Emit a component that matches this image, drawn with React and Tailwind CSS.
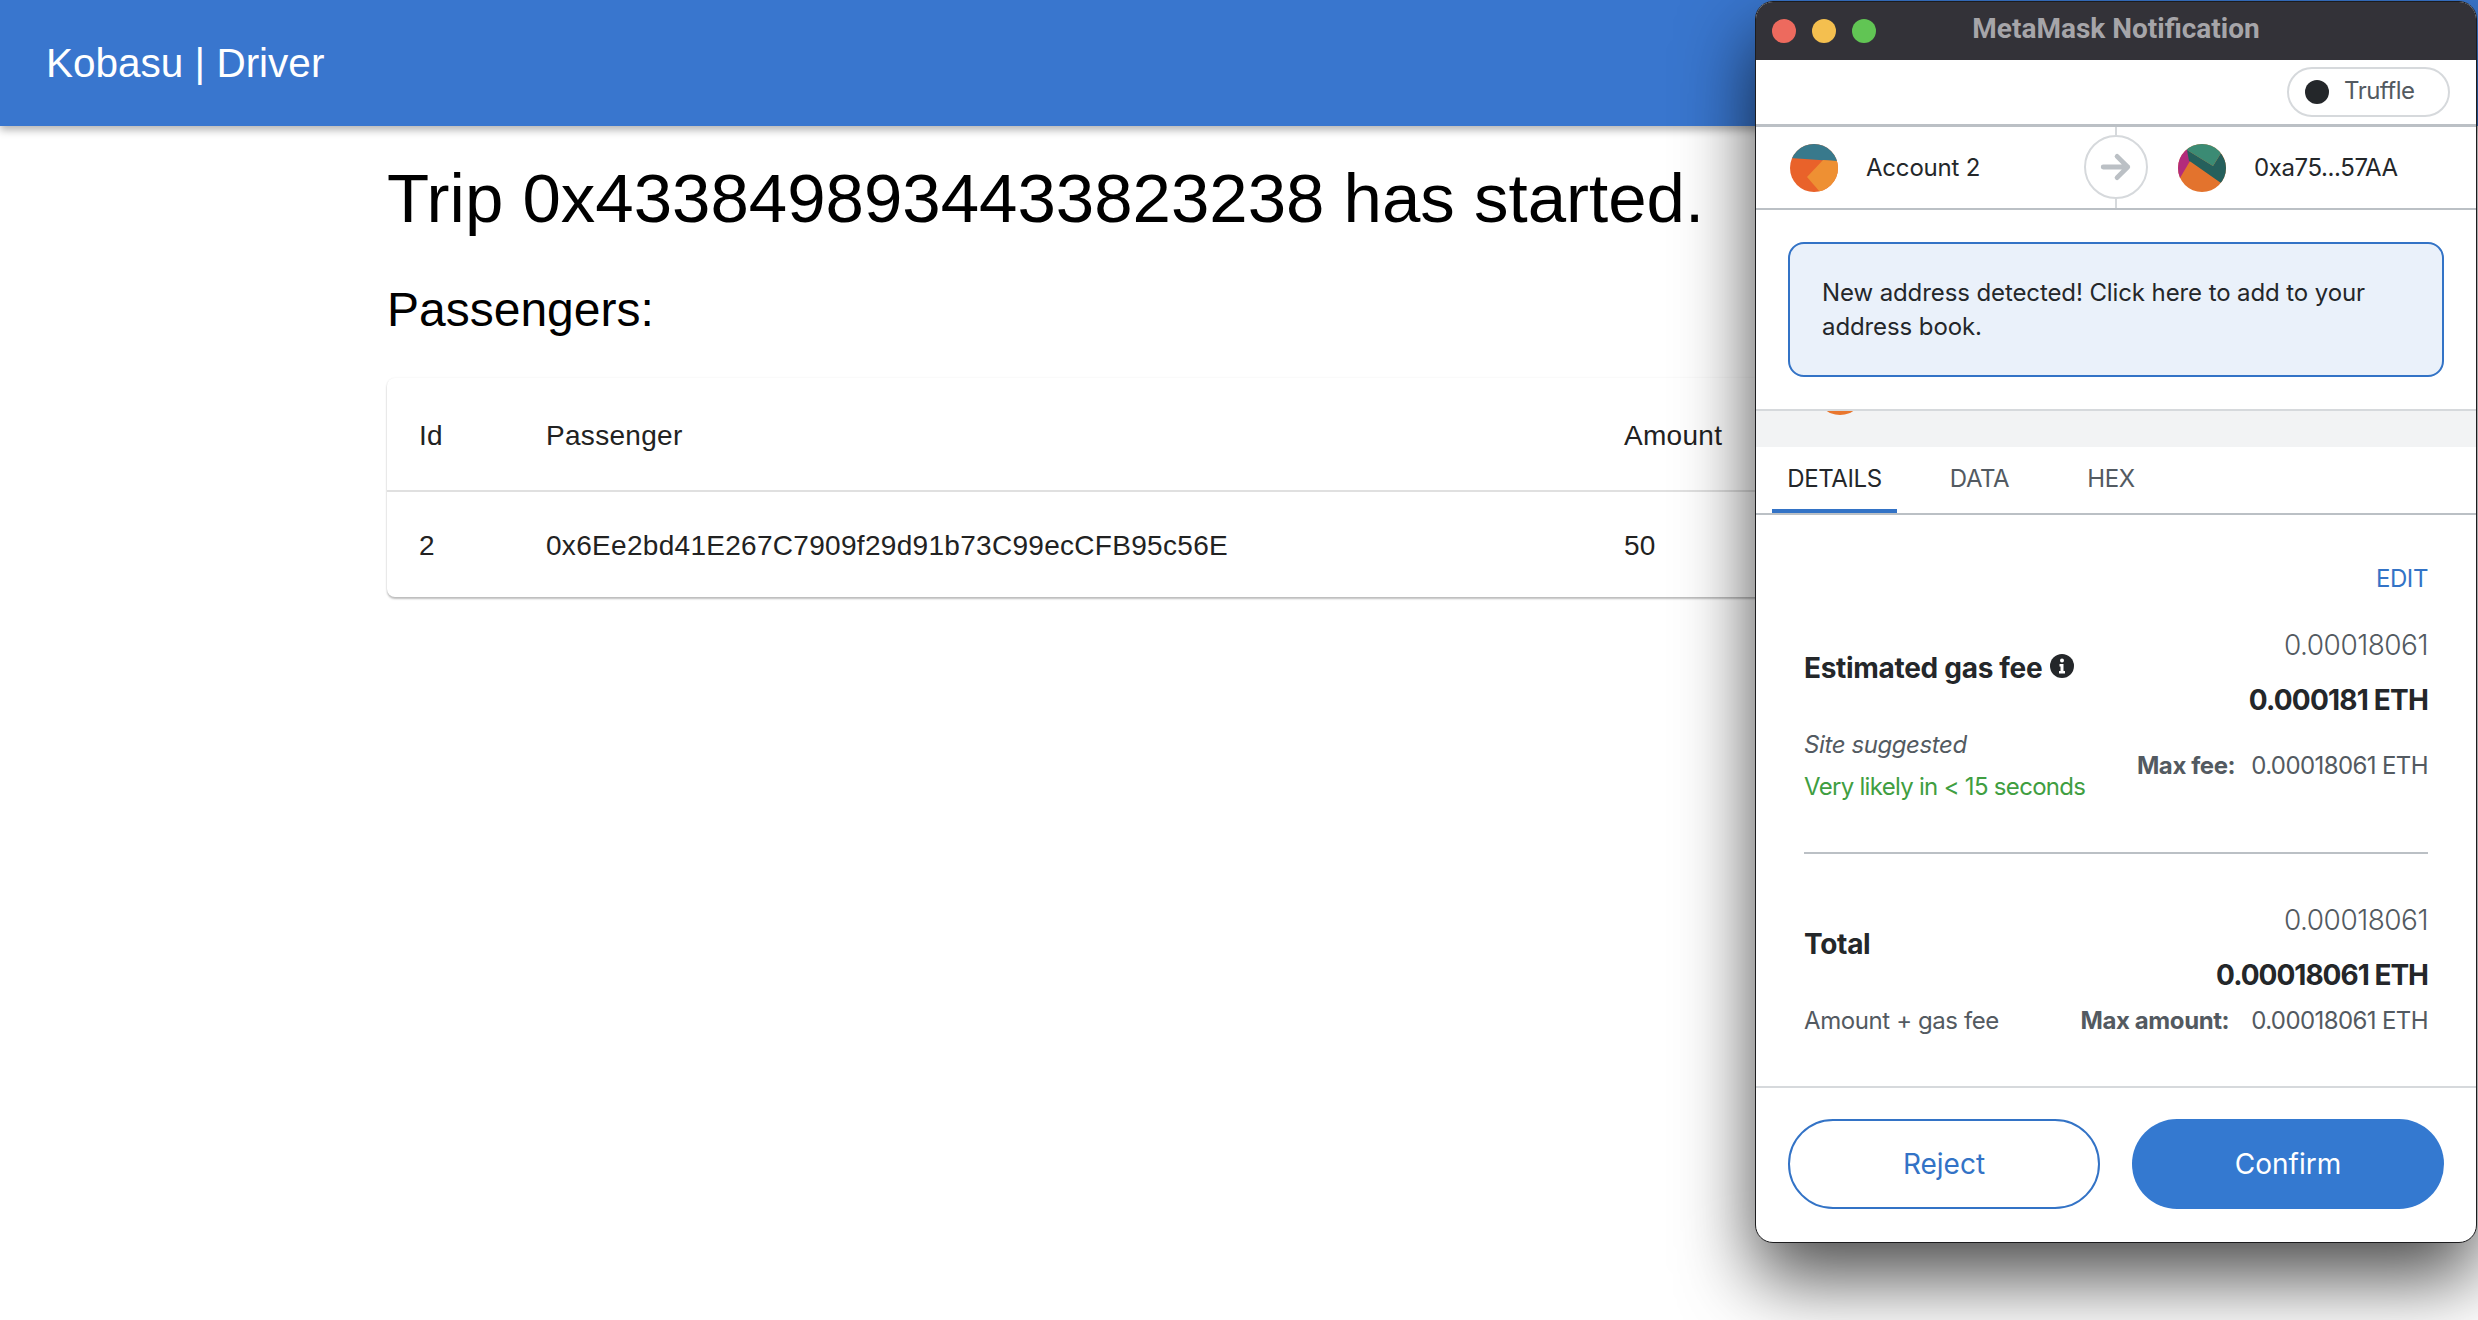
function Avatar1() {
  return (
    <svg width="48" height="48" viewBox="0 0 48 48" className="shrink-0">
      <clipPath id="a1"><circle cx="24" cy="24" r="24" /></clipPath>
      <g clipPath="url(#a1)">
        <rect width="48" height="48" fill="#e9622a" />
        <polygon points="0,0 48,0 48,17 44,17 0,14" fill="#38798c" />
        <polygon points="17,33 33,16 48,17 48,48 30,48" fill="#ee9033" />
      </g>
    </svg>
  );
}

function Avatar2() {
  return (
    <svg width="48" height="48" viewBox="0 0 48 48" className="shrink-0">
      <clipPath id="a2"><circle cx="24" cy="24" r="24" /></clipPath>
      <g clipPath="url(#a2)">
        <rect width="48" height="48" fill="#e3732d" />
        <polygon points="0,0 10,6 12,17 2,34 0,34" fill="#b32b7c" />
        <polygon points="9,6 35,22 43,9 48,18 48,48 43,39 13,18 11,17" fill="#25605c" />
        <polygon points="9,6 10,0 48,0 43,9 35,22" fill="#3b8b74" />
      </g>
    </svg>
  );
}

function InfoIcon() {
  return (
    <svg width="24" height="24" viewBox="0 0 24 24" className="mt-[-4px] ml-2 shrink-0">
      <circle cx="12" cy="12" r="12" fill="#24272a" />
      <circle cx="12" cy="6.5" r="2" fill="#fff" />
      <path d="M9.5 10h4v7h1.5v2.5H9V17h1.5v-4.5h-1z" fill="#fff" />
    </svg>
  );
}

function MetaMaskWindow() {
  return (
    <div className="absolute left-[1755px] top-[1px] w-[722px] h-[1242px] flex flex-col overflow-hidden bg-white border border-[#1c1c1e] rounded-[18px] shadow-[0_35px_75px_rgba(0,0,0,0.7)] font-['Inter',sans-serif] text-[24px] leading-[34px] text-[#24272a]">
      <div className="relative h-[58px] shrink-0 flex items-center justify-center bg-[#333238]">
        <div className="absolute left-[16px] top-[17px] flex gap-[16px]">
          <span className="w-[24px] h-[24px] rounded-full bg-[#ed6a5e]" />
          <span className="w-[24px] h-[24px] rounded-full bg-[#f4bf4f]" />
          <span className="w-[24px] h-[24px] rounded-full bg-[#61c554]" />
        </div>
        <span className="pb-[4px] font-['Roboto',sans-serif] font-bold text-[28px] text-[#a6a5a9]">MetaMask Notification</span>
      </div>

      <div className="h-[67px] shrink-0 flex items-center justify-end pr-[26px] border-b-[3px] border-[#bbc0c5]">
        <div className="h-[50px] w-[163px] flex items-center gap-[15px] pl-[16px] rounded-full border-[2px] border-[#d6d9dc] text-[#535a61]">
          <span className="w-[24px] h-[24px] rounded-full bg-[#24272a]" />
          <span className="tracking-[-0.5px] pb-[2px]">Truffle</span>
        </div>
      </div>

      <div className="relative h-[83px] shrink-0 flex items-center border-b-[2px] border-[#bbc0c5]">
        <div className="w-[360px] flex items-center gap-[28px] pl-[34px]">
          <Avatar1 />
          <span className="tracking-[-0.2px]">Account 2</span>
        </div>
        <div className="absolute left-[359px] top-0 bottom-0 w-[2px] bg-[#d6d9dc]" />
        <div className="absolute left-[328px] top-[8px] w-[64px] h-[64px] flex items-center justify-center rounded-full bg-white border-[2px] border-[#d6d9dc]">
          <svg width="32" height="32" viewBox="0 0 30 30" fill="none" stroke="#bbc0c5" strokeWidth="4.5" strokeLinecap="round" strokeLinejoin="round">
            <path d="M3 15h23M16 5l10 10-10 10" />
          </svg>
        </div>
        <div className="flex items-center gap-[28px] pl-[62px]">
          <Avatar2 />
          <span className="tracking-[-0.4px]">0xa75...57AA</span>
        </div>
      </div>

      <div className="h-[201px] shrink-0 pt-[32px] px-[32px] border-b-[2px] border-[#d6d9dc]">
        <div className="h-[135px] pl-[32px] pr-[40px] flex items-center rounded-[16px] border-[2px] border-[#3373c6] bg-[#eaf1fa]">
          <span className="tracking-[-0.1px]">New address detected! Click here to add to your address book.</span>
        </div>
      </div>

      <div className="relative h-[36px] shrink-0 overflow-hidden bg-[#f2f3f4]">
        <div className="absolute left-[60px] top-[-44px] w-[48px] h-[48px] rounded-full bg-[#e9762d]" />
      </div>

      <div className="h-[68px] shrink-0 flex items-end pl-[16px] border-b-[2px] border-[#bbc0c5] text-[24px] tracking-[-0.4px]">
        <div className="w-[125px] h-[66px] flex items-center justify-center pt-[1px] border-b-[4px] border-[#3373c6]">DETAILS</div>
        <div className="w-[61px] h-[66px] ml-[52px] flex items-center justify-center pb-[3px] text-[#535a61]">DATA</div>
        <div className="w-[46px] h-[66px] ml-[78px] flex items-center justify-center pb-[3px] text-[#535a61]">HEX</div>
      </div>

      <div className="shrink-0 px-[48px] pt-[47px]">
        <div className="text-right text-[24px] tracking-[-0.4px] text-[#3373c6]">EDIT</div>
        <div className="flex justify-between mt-[32px]">
          <div className="flex flex-col">
            <div className="mt-[23px] flex items-center font-bold text-[28px] tracking-[-0.3px]">Estimated gas fee<InfoIcon /></div>
            <div className="mt-[43px] italic text-[#535a61] tracking-[-0.4px]">Site suggested</div>
            <div className="mt-[8px] text-[#3f9e41] tracking-[-0.7px]">Very likely in &lt; 15 seconds</div>
          </div>
          <div className="flex flex-col items-end">
            <div className="text-[28px] font-light text-[#535a61] tracking-[-0.5px]">0.00018061</div>
            <div className="mt-[21px] text-[28px] font-bold tracking-[-0.8px]">0.000181 ETH</div>
            <div className="mt-[32px] flex gap-[16px] text-[#535a61] tracking-[-0.4px]"><span className="font-bold">Max fee:</span><span className="tracking-[-0.6px]">0.00018061 ETH</span></div>
          </div>
        </div>
        <div className="mt-[48px] h-[2px] bg-[#bbc0c5]" />
        <div className="flex justify-between">
          <div className="flex flex-col">
            <div className="mt-[73px] font-bold text-[28px] tracking-[-0.3px]">Total</div>
            <div className="mt-[43px] text-[#535a61] tracking-[-0.4px]">Amount + gas fee</div>
          </div>
          <div className="flex flex-col items-end">
            <div className="mt-[49px] text-[28px] font-light text-[#535a61] tracking-[-0.5px]">0.00018061</div>
            <div className="mt-[21px] text-[28px] font-bold tracking-[-1px]">0.00018061 ETH</div>
            <div className="mt-[12px] flex gap-[22px] text-[#535a61] tracking-[-0.4px]"><span className="font-bold">Max amount:</span><span className="tracking-[-0.6px]">0.00018061 ETH</span></div>
          </div>
        </div>
      </div>

      <div className="mt-[48px] flex-1 flex gap-[32px] px-[32px] pt-[31px] border-t-[2px] border-[#d6d9dc]">
        <button className="h-[90px] w-[312px] flex items-center justify-center rounded-full border-[2px] border-[#3373c6] text-[28px] text-[#3373c6]">Reject</button>
        <button className="h-[90px] w-[312px] flex items-center justify-center rounded-full bg-[#3479d0] text-[28px] text-white">Confirm</button>
      </div>
    </div>
  );
}

export default function App() {
  return (
    <div className="relative w-[2478px] h-[1320px] overflow-hidden bg-white font-['Liberation_Sans',sans-serif] text-black">
      <header className="h-[126px] flex items-center pl-[46px] bg-[#3976ce] text-white text-[40.5px] shadow-[0_4px_8px_rgba(0,0,0,0.3)]">
        Kobasu | Driver
      </header>
      <main className="pl-[387px] pr-[387px]">
        <h1 className="mt-[31px] text-[69px] leading-[84px]">Trip 0x4338498934433823238 has started.</h1>
        <h2 className="mt-[41px] text-[48px] leading-[56px]">Passengers:</h2>
        <div className="mt-[40px] rounded-[8px] bg-white shadow-[0_2px_2px_rgba(0,0,0,0.25),0_0_2px_rgba(0,0,0,0.08)] text-[28px] tracking-[0.3px] text-[#222]">
          <div className="h-[114px] pt-[4px] flex items-center border-b-[2px] border-[#e0e0e0]">
            <span className="w-[159px] pl-[32px]">Id</span>
            <span className="w-[1078px]">Passenger</span>
            <span>Amount</span>
          </div>
          <div className="h-[105px] pt-[3px] flex items-center">
            <span className="w-[159px] pl-[32px]">2</span>
            <span className="w-[1078px]">0x6Ee2bd41E267C7909f29d91b73C99ecCFB95c56E</span>
            <span>50</span>
          </div>
        </div>
      </main>
      <MetaMaskWindow />
    </div>
  );
}
